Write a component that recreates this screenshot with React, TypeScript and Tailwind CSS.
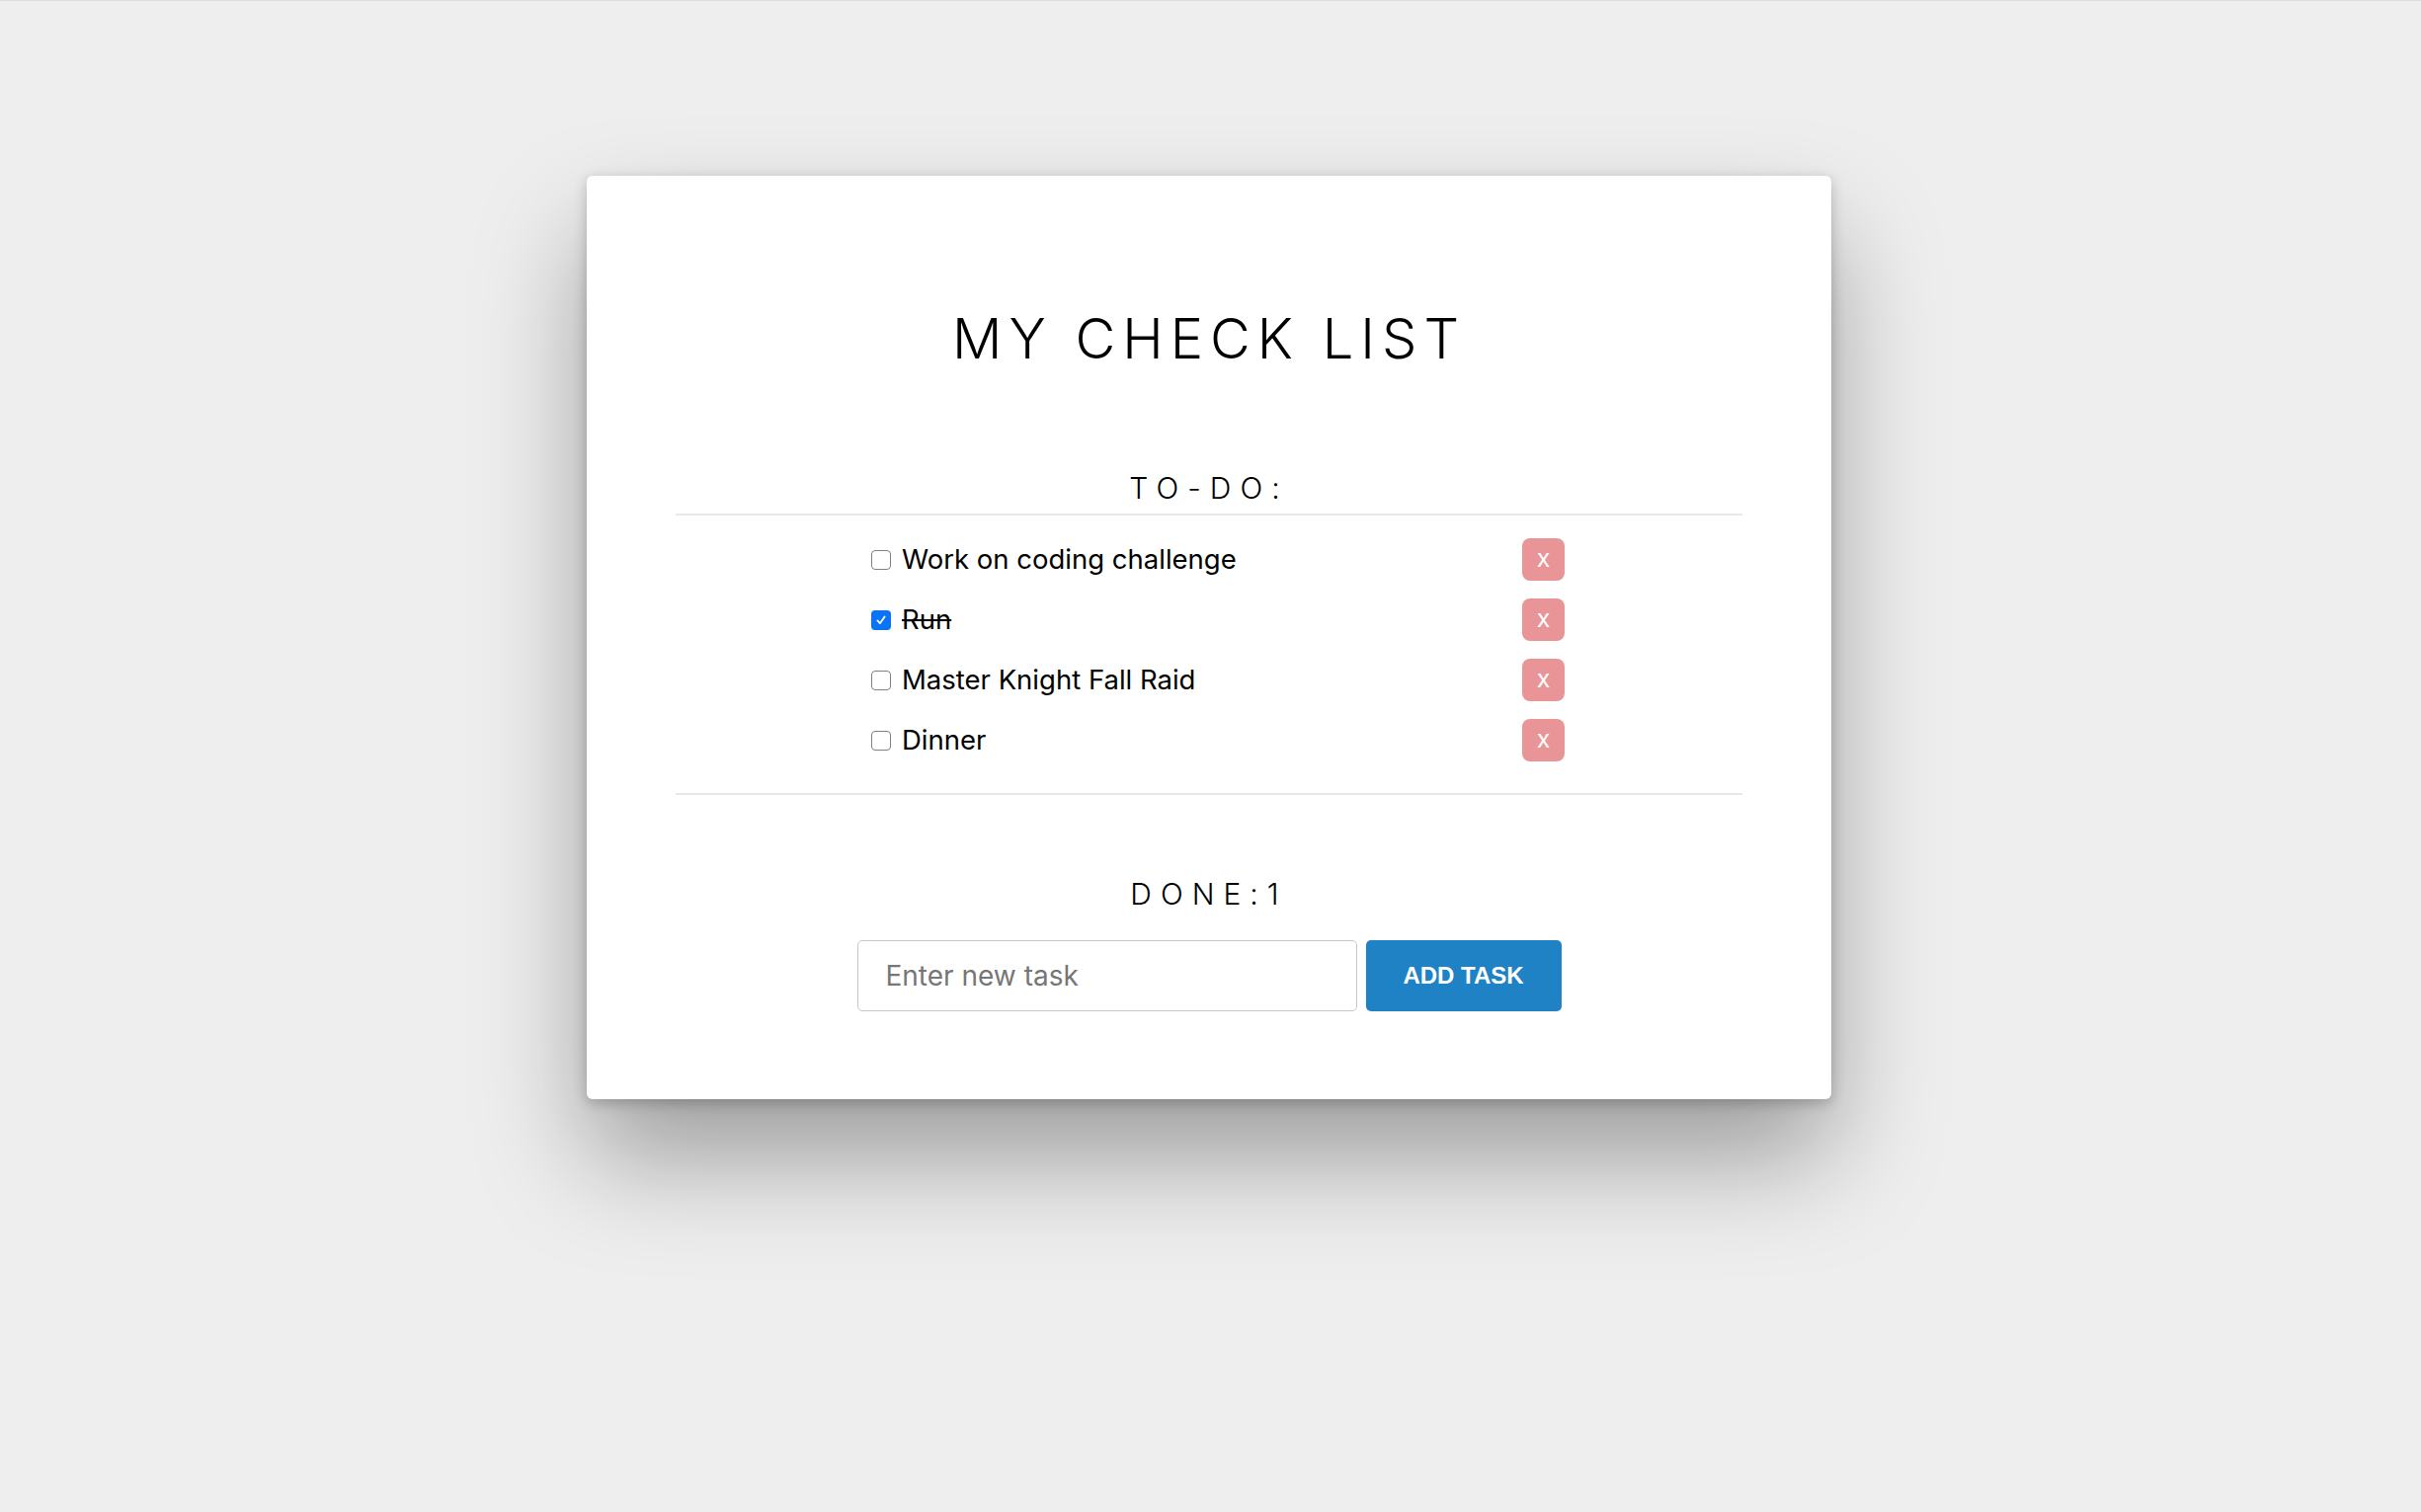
import React, { useState } from "react";

type Task = { id: number; text: string; done: boolean };

const font = { fontFamily: "Inter, 'Liberation Sans', sans-serif" };

function Check({ checked, onClick }: { checked: boolean; onClick: () => void }) {
  return (
    <button
      type="button"
      onClick={onClick}
      className={
        checked
          ? "flex h-[20px] w-[20px] shrink-0 items-center justify-center rounded-[4px] bg-[#0a74f5]"
          : "flex h-[20px] w-[20px] shrink-0 items-center justify-center rounded-[4px] border-[1.5px] border-[#808080] bg-white"
      }
    >
      {checked && (
        <svg viewBox="0 0 20 20" className="h-[16px] w-[16px]">
          <path d="M5.5 10.5 L8.6 14 L14.5 5.5" fill="none" stroke="white" strokeWidth="2.2" strokeLinecap="round" strokeLinejoin="round" />
        </svg>
      )}
    </button>
  );
}

export default function App() {
  const [tasks, setTasks] = useState<Task[]>([
    { id: 1, text: "Work on coding challenge", done: false },
    { id: 2, text: "Run", done: true },
    { id: 3, text: "Master Knight Fall Raid", done: false },
    { id: 4, text: "Dinner", done: false },
  ]);
  const [value, setValue] = useState("");
  const doneCount = tasks.filter((t) => t.done).length;

  return (
    <div className="min-h-[1531px] w-full border-t border-[#dcdcdc] bg-[#eeeeee] pt-[177px] pr-[3px]" style={font}>
      <div className="mx-auto flex w-[1260px] flex-col items-center rounded-[6px] bg-white px-[90px] pt-[137px] pb-[89px] shadow-[0_60px_110px_rgba(0,0,0,0.34),0_4px_14px_rgba(0,0,0,0.22)]">
        <h1 className="flex h-[56px] items-center text-[56px] font-light leading-none tracking-[0.125em] text-black">
          MY CHECK LIST
        </h1>
        <h2 className="mt-[108px] flex h-[30px] items-center text-[30px] font-light leading-none tracking-[0.3em] text-black">
          TO-DO:
        </h2>
        <div className="mt-[11px] h-[2px] w-full bg-[#e8e8e8]" />
        <ul className="mt-[23px] flex w-[720px] flex-col gap-[18px] pl-[18px]">
          {tasks.map((t) => (
            <li key={t.id} className="flex h-[43px] items-center justify-between">
              <div className="flex items-center gap-[11px]">
                <Check
                  checked={t.done}
                  onClick={() =>
                    setTasks((ts) => ts.map((x) => (x.id === t.id ? { ...x, done: !x.done } : x)))
                  }
                />
                <span className={t.done ? "text-[27.5px] leading-none text-black line-through" : "text-[27.5px] leading-none text-black"}>
                  {t.text}
                </span>
              </div>
              <button
                type="button"
                onClick={() => setTasks((ts) => ts.filter((x) => x.id !== t.id))}
                className="flex h-[43px] w-[43px] items-center justify-center rounded-[8px] bg-[#e99497] pb-[3px] text-[25px] leading-none text-white"
              >
                x
              </button>
            </li>
          ))}
        </ul>
        <div className="mt-[32px] h-[2px] w-full bg-[#e8e8e8]" />
        <h2 className="mt-[85px] flex h-[30px] items-center text-[30px] font-light leading-none tracking-[0.3em] text-black">
          DONE:{doneCount}
        </h2>
        <form
          className="mt-[32px] flex gap-[9px]"
          onSubmit={(e) => {
            e.preventDefault();
            if (!value.trim()) return;
            setTasks((ts) => [...ts, { id: Date.now(), text: value.trim(), done: false }]);
            setValue("");
          }}
        >
          <input
            value={value}
            onChange={(e) => setValue(e.target.value)}
            placeholder="Enter new task"
            className="h-[72px] w-[506px] rounded-[5px] border border-[#c6c6c6] bg-white px-[28px] text-[28px] text-black outline-none placeholder:text-[#767676]"
          />
          <button
            type="submit"
            className="h-[72px] w-[198px] rounded-[5px] bg-[#1e82c5] text-[24px] font-bold text-white"
            style={{ fontFamily: "'Liberation Sans', Arial, sans-serif" }}
          >
            ADD TASK
          </button>
        </form>
      </div>
    </div>
  );
}
